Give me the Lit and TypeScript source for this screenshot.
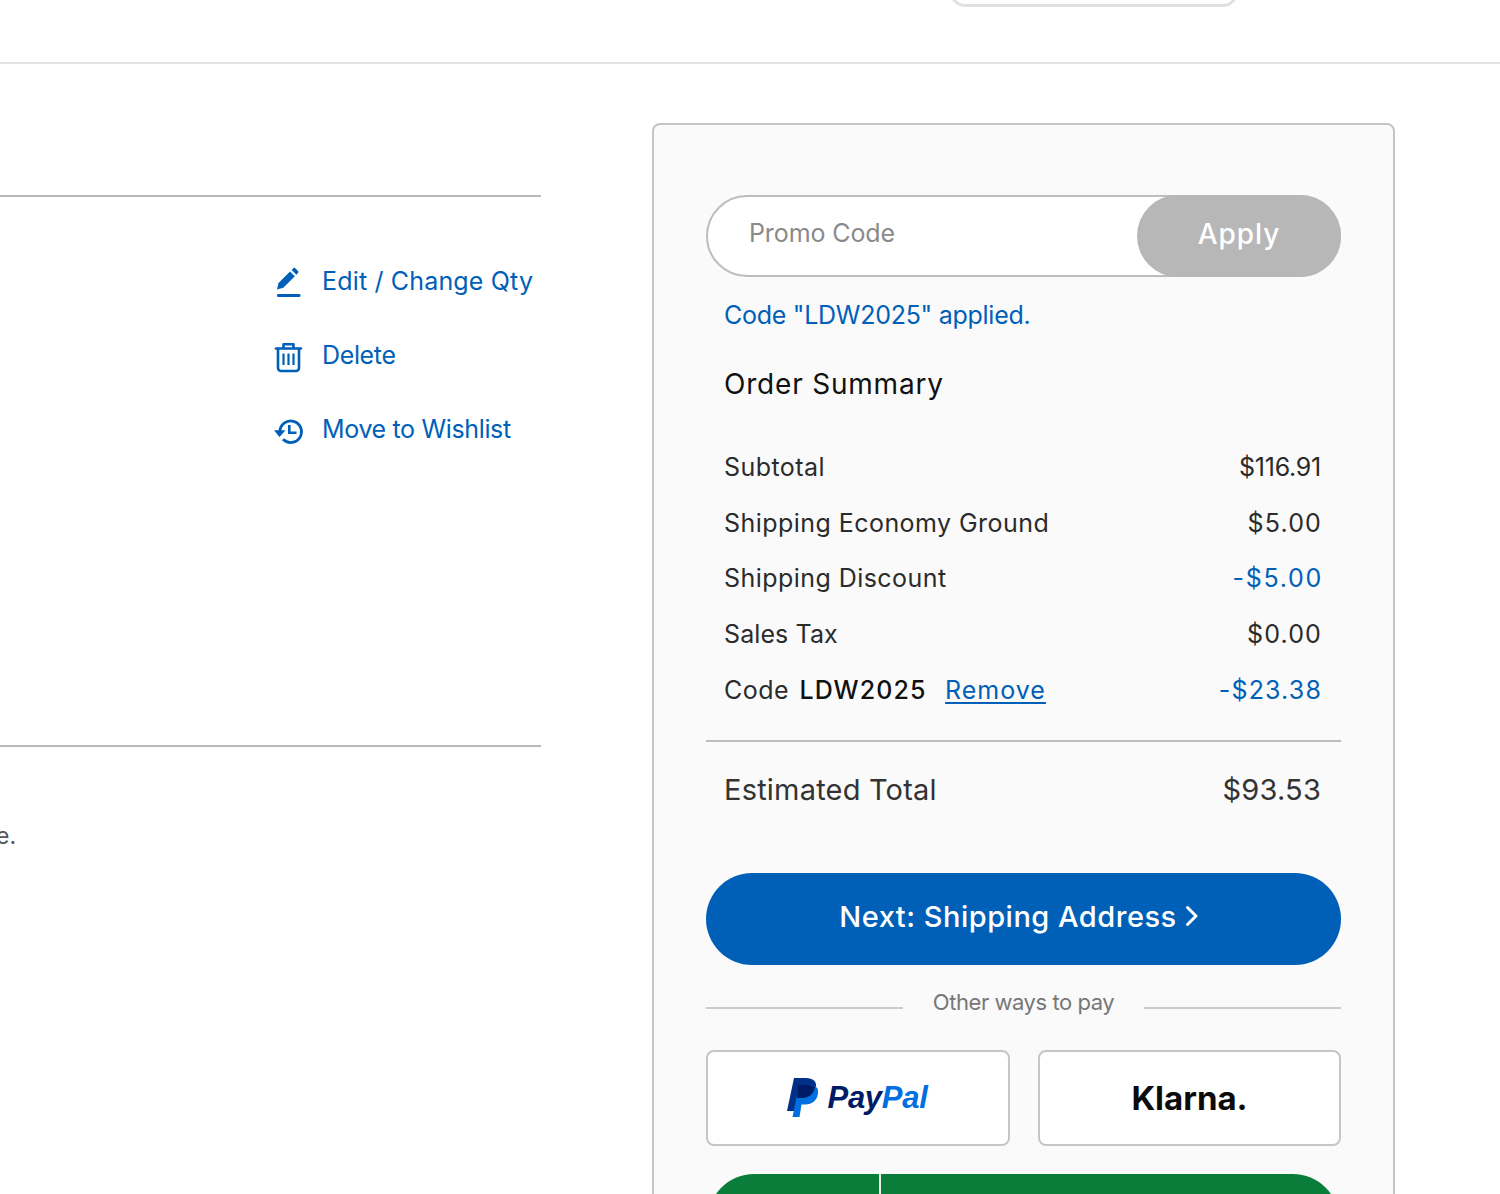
import { LitElement, html, css, svg } from "lit";
import { customElement } from "lit/decorators.js";

const editIcon = svg`<svg class="ico" viewBox="0 0 30 30" width="30" height="30" fill="#0060b8"><path d="M4 23.500 5.500 17 17 5.500 21.800 10.300 10.300 21.800z"/><path d="M18.600 3.900 20.300 2.200c.6-.6 1.400-.6 2 0l2.700 2.700c.6.6.6 1.400 0 2L23.400 8.700z"/><rect x="4" y="28" width="23.500" height="3" rx="1.300"/></svg>`;
const trashIcon = svg`<svg class="ico" viewBox="0 0 30 30" width="30" height="30" fill="none" stroke="#0060b8" stroke-width="2.600" stroke-linejoin="round" stroke-linecap="round"><path d="M3 8.500h25"/><path d="M10.500 8V4.300h10V8"/><path d="M5 9v19a3 3 0 0 0 3 3h15a3 3 0 0 0 3-3V9"/><path d="M10.500 13.500v11.500M15.500 13.500v11.500M20.500 13.500v11.500" stroke-width="2.200" stroke-linecap="butt"/></svg>`;
const historyIcon = svg`<svg class="ico" viewBox="0 0 30 30" width="30" height="30" fill="none" stroke="#0060b8" stroke-width="2.800"><path d="M6.900 17.700A10.800 10.800 0 1 1 10 25.300"/><path d="M16.300 11v7.700H23.500" stroke-width="2.600"/><path d="M1 16.300h11.500L6.500 23z" fill="#0060b8" stroke="none"/></svg>`;
const chevron = svg`<svg class="chev" viewBox="0 0 14 22" width="14" height="22" fill="none" stroke="#fff" stroke-width="3" stroke-linecap="round" stroke-linejoin="round"><path d="M2.500 2.500 11 11l-8.500 8.500"/></svg>`;
const ppMark = svg`<svg class="ppmark" viewBox="0 0 32 40" width="32" height="40"><path d="M7 0h12c7 0 11 3.500 10 9.500C28 17 22.500 21 15.500 21h-5L8 33H0z" fill="#003087"/><path d="M12 7h11c6 0 9 3.500 8 8.500C30 22.500 25 26.500 18.500 26.500h-4L12.500 39H5.500z" fill="#0070e0"/><path d="M11 7h10.500c2.500 0 5 .8 6.500 2-1 7-6.500 11-13 11h-5z" fill="#001c64"/></svg>`;

@customElement("app-root")
export class AppRoot extends LitElement {
  static styles = css`
    :host {
      display: block;
      width: 1500px;
      height: 1194px;
      overflow: hidden;
      background: #fff;
      font-family: Inter, "Liberation Sans", sans-serif;
      color: #2b2b2b;
    }
    .top {
      display: flow-root;
      height: 62px;
      border-bottom: 2px solid #e4e4e4;
      box-sizing: content-box;
      padding-left: 950px;
    }
    .search {
      width: 288px;
      height: 30px;
      margin-top: -23px;
      box-sizing: border-box;
      border: 3px solid #e0e0e0;
      border-radius: 18px;
    }
    .main {
      display: flex;
      gap: 111px;
      padding-top: 59px;
    }
    .left {
      width: 541px;
      flex: none;
      padding-top: 72px;
      overflow: hidden;
    }
    .item {
      height: 552px;
      box-sizing: border-box;
      border-top: 2px solid #b9b9b9;
      border-bottom: 2px solid #b9b9b9;
      padding: 69px 0 0 273px;
      display: flex;
      flex-direction: column;
      gap: 44px;
    }
    .action {
      display: flex;
      align-items: center;
      gap: 19px;
      height: 30px;
      color: #0060b8;
      font-size: 25px;
      letter-spacing: -0.35px;
      white-space: nowrap;
    }
    .action.wide { letter-spacing: 0.17px; }
    .ico { flex: none; overflow: visible; }
    .note {
      margin: 75px 0 0 -4px;
      font-size: 23px;
      line-height: 28px;
      color: #555;
    }
    .card {
      width: 743px;
      height: 1200px;
      box-sizing: border-box;
      flex: none;
      border: 2px solid #c4c4c4;
      border-radius: 8px;
      background: #fafafa;
      padding: 70px 52px 0 52px;
    }
    .promo {
      height: 82px;
      box-sizing: border-box;
      display: flex;
      justify-content: space-between;
      align-items: stretch;
      background: #fff;
      border: 2px solid #bdbdbd;
      border-radius: 41px;
    }
    .promo-label {
      align-self: center;
      padding: 0 0 6px 41px;
      font-size: 25px;
      letter-spacing: -0.1px;
      color: #8a8a8a;
    }
    .apply {
      width: 204px;
      margin: -2px -2px -2px 0;
      border-radius: 41px;
      background: #b7b7b7;
      color: #fff;
      font-size: 28px;
      font-weight: 500;
      letter-spacing: 0.9px;
      display: flex;
      align-items: center;
      justify-content: center;
      padding-bottom: 4px;
      box-sizing: border-box;
    }
    .applied {
      margin: 22px 0 0 18px;
      height: 32px;
      line-height: 32px;
      font-size: 25px;
      letter-spacing: -0.27px;
      color: #0060b8;
    }
    h2 {
      margin: 35px 0 0 18px;
      height: 36px;
      line-height: 36px;
      font-size: 28px;
      font-weight: 400;
      letter-spacing: 0.8px;
      color: #111;
    }
    .rows {
      margin-top: 37px;
      padding: 0 20px 22px 18px;
      border-bottom: 2px solid #bcbcbc;
      display: flex;
      flex-direction: column;
    }
    .row {
      display: flex;
      justify-content: space-between;
      align-items: center;
      height: 55.800px;
      font-size: 25px;
      letter-spacing: 0.45px;
      color: #2b2b2b;
    }
    .row .narrow { letter-spacing: 0.1px; }
    .num { letter-spacing: 1.15px; margin-right: -1px; }
    .num.tight { letter-spacing: -0.25px; margin-right: 0; }
    .num.wide { letter-spacing: 1.7px; margin-right: -2px; }
    .blue { color: #0060b8; }
    .code b { font-weight: 500; color: #111; letter-spacing: 1.1px; margin-left: 3px; }
    .code a { margin-left: 11px; color: #0060b8; letter-spacing: 1px; text-decoration: underline; text-underline-offset: 3px; }
    .total {
      display: flex;
      justify-content: space-between;
      align-items: center;
      margin-top: 28px;
      padding: 0 20px 0 18px;
      height: 40px;
      font-size: 29px;
      letter-spacing: 0.2px;
      color: #333;
    }
    .next {
      margin-top: 63px;
      height: 92px;
      border-radius: 46px;
      background: #0060b8;
      color: #fff;
      display: flex;
      align-items: center;
      justify-content: center;
      gap: 8px;
      font-size: 29px;
      font-weight: 500;
      letter-spacing: 0.5px;
      padding: 0 9px 5px 0;
      box-sizing: border-box;
    }
    .other {
      margin-top: 21px;
      display: flex;
      align-items: center;
      justify-content: space-between;
      height: 32px;
      font-size: 22px;
      letter-spacing: -0.45px;
      color: #777;
    }
    .other i {
      display: block;
      width: 197px;
      height: 2px;
      background: #cbcbcb;
      margin-top: 12px;
    }
    .pay {
      margin-top: 32px;
      display: grid;
      grid-template-columns: 304px 303px;
      justify-content: space-between;
    }
    .paybtn {
      height: 96px;
      box-sizing: border-box;
      border: 2px solid #c6c6c6;
      border-radius: 8px;
      background: #fff;
      display: flex;
      align-items: center;
      justify-content: center;
    }
    .pp {
      display: flex;
      align-items: center;
      gap: 9px;
      margin-right: 2px;
      font-family: "Liberation Sans", Arial, sans-serif;
      font-style: italic;
      font-weight: 700;
      font-size: 31px;
      letter-spacing: -0.3px;
      color: #001c64;
    }
    .pp em { color: #0070e0; font-style: inherit; }
    .klarna {
      font-family: Inter, sans-serif;
      font-weight: 700;
      font-size: 33px;
      letter-spacing: 0;
      color: #0b0b0b;
    }
    .green {
      margin: 28px 2px 0;
      height: 100px;
      border-radius: 46px 46px 0 0;
      background: #0a7d3a;
      display: grid;
      grid-template-columns: 171px 2px;
    }
    .green i { grid-column: 2; display: block; background: #e8f2ec; }
  `;

  render() {
    return html`
      <div class="top"><div class="search"></div></div>
      <div class="main">
        <div class="left">
          <div class="item">
            <div class="action wide">${editIcon}<span>Edit / Change Qty</span></div>
            <div class="action">${trashIcon}<span>Delete</span></div>
            <div class="action">${historyIcon}<span>Move to Wishlist</span></div>
          </div>
          <div class="note">e.</div>
        </div>
        <div class="card">
          <div class="promo">
            <span class="promo-label">Promo Code</span>
            <span class="apply">Apply</span>
          </div>
          <div class="applied">Code "LDW2025" applied.</div>
          <h2>Order Summary</h2>
          <div class="rows">
            <div class="row"><span>Subtotal</span><span class="num tight">$116.91</span></div>
            <div class="row"><span>Shipping Economy Ground</span><span class="num">$5.00</span></div>
            <div class="row"><span>Shipping Discount</span><span class="num wide blue">-$5.00</span></div>
            <div class="row"><span class="narrow">Sales Tax</span><span class="num">$0.00</span></div>
            <div class="row">
              <span class="code">Code <b>LDW2025</b> <a>Remove</a></span>
              <span class="num blue">-$23.38</span>
            </div>
          </div>
          <div class="total"><span>Estimated Total</span><span>$93.53</span></div>
          <div class="next"><span>Next: Shipping Address</span>${chevron}</div>
          <div class="other"><i></i><span>Other ways to pay</span><i></i></div>
          <div class="pay">
            <div class="paybtn"><span class="pp">${ppMark}<span>Pay<em>Pal</em></span></span></div>
            <div class="paybtn"><span class="klarna">Klarna.</span></div>
          </div>
          <div class="green"><i></i></div>
        </div>
      </div>
    `;
  }
}
